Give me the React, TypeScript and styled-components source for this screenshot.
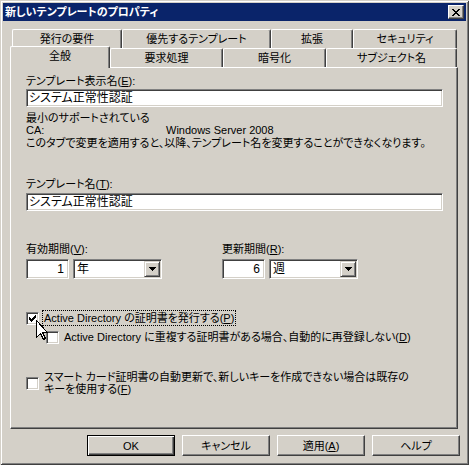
import React from 'react';
import styled, { createGlobalStyle } from 'styled-components';

const FACE = '#D4D0C8';
const SHADOW = '#808080';
const DARK = '#404040';

const GlobalStyle = createGlobalStyle`
  html, body { margin: 0; padding: 0; background: ${FACE}; }
  * { box-sizing: border-box; }
`;

const Window = styled.div`
  position: relative;
  width: 469px;
  height: 465px;
  padding: 3px;
  background: ${FACE};
  display: flex;
  flex-direction: column;
  box-shadow: inset 1px 1px 0 ${FACE}, inset -1px -1px 0 ${DARK}, inset 2px 2px 0 #fff,
    inset -2px -2px 0 ${SHADOW};
  font-family: "Liberation Sans", "Noto Sans CJK JP", sans-serif;
  font-size: 11px;
  font-feature-settings: "palt";
  color: #000;
  line-height: 12px;
`;

const TitleBar = styled.div`
  height: 18px;
  flex: none;
  background: #0a246a;
  color: #fff;
  font-weight: bold;
  font-size: 11px;
  display: flex;
  align-items: center;
  justify-content: space-between;
  padding: 0 2px 0 2px;
`;

const CloseButton = styled.div`
  width: 16px;
  height: 14px;
  background: ${FACE};
  border-top: 1px solid #fff;
  border-left: 1px solid #fff;
  border-right: 1px solid ${DARK};
  border-bottom: 1px solid ${DARK};
  box-shadow: inset -1px -1px 0 ${SHADOW};
  display: flex;
  align-items: center;
  justify-content: center;
  padding-right: 1px;
`;

const Body = styled.div`
  flex: 1;
  display: flex;
  flex-direction: column;
  padding: 8px 6px 0 7px;
`;

const TabRow = styled.div<{ $indent: number }>`
  display: flex;
  height: 19px;
  padding-left: ${(p) => p.$indent}px;
`;

const Tab = styled.div<{ $w: number; $active?: boolean }>`
  flex: none;
  width: ${(p) => p.$w}px;
  height: ${(p) => (p.$active ? 22 : 19)}px;
  margin: ${(p) => (p.$active ? '-2px 0 -1px 0' : '0')};
  position: relative;
  z-index: ${(p) => (p.$active ? 2 : 1)};
  background: ${FACE};
  border-top: 1px solid #fff;
  border-left: 1px solid #fff;
  border-right: 1px solid ${DARK};
  border-radius: 2px 2px 0 0;
  box-shadow: inset -1px 0 0 ${SHADOW};
  display: flex;
  align-items: center;
  justify-content: center;
  padding-bottom: ${(p) => (p.$active ? 4 : 0)}px;
  font-size: 11px;
`;

const Panel = styled.div`
  height: 362px;
  margin-right: 2px;
  flex: none;
  border-top: 1px solid #fff;
  border-left: 1px solid #fff;
  border-right: 1px solid ${DARK};
  border-bottom: 1px solid ${DARK};
  box-shadow: inset -1px -1px 0 ${SHADOW};
  padding: 7px 0 0 15px;
  display: flex;
  flex-direction: column;
  align-items: flex-start;
`;

const Text = styled.div<{ $mt?: number }>`
  margin-top: ${(p) => p.$mt ?? 0}px;
  line-height: 12px;
  white-space: nowrap;
`;

const InfoRow = styled.div`
  display: flex;
  line-height: 12px;
`;

const InfoKey = styled.span`
  width: 140px;
`;

const Edit = styled.div<{ $w: number; $h?: number; $mt?: number; $right?: boolean }>`
  flex: none;
  width: ${(p) => p.$w}px;
  height: ${(p) => p.$h ?? 18}px;
  margin-top: ${(p) => p.$mt ?? 0}px;
  background: #fff;
  border-top: 1px solid ${SHADOW};
  border-left: 1px solid ${SHADOW};
  border-bottom: 1px solid #fff;
  border-right: 1px solid #fff;
  box-shadow: inset 1px 1px 0 ${DARK}, inset -1px -1px 0 ${FACE};
  padding: 0 ${(p) => (p.$right ? 4 : 2)}px 0 2px;
  display: flex;
  align-items: center;
  justify-content: ${(p) => (p.$right ? 'flex-end' : 'flex-start')};
  font-size: 12px;
  white-space: nowrap;
`;

const Combo = styled.div<{ $w: number }>`
  flex: none;
  width: ${(p) => p.$w}px;
  height: 20px;
  background: #fff;
  border-top: 1px solid ${SHADOW};
  border-left: 1px solid ${SHADOW};
  border-bottom: 1px solid #fff;
  border-right: 1px solid #fff;
  box-shadow: inset 1px 1px 0 ${DARK}, inset -1px -1px 0 ${FACE};
  padding: 1px 1px 1px 3px;
  display: flex;
  align-items: center;
  justify-content: space-between;
  font-size: 12px;
`;

const DropButton = styled.div`
  width: 16px;
  height: 16px;
  background: ${FACE};
  border-top: 1px solid ${FACE};
  border-left: 1px solid ${FACE};
  border-right: 1px solid ${DARK};
  border-bottom: 1px solid ${DARK};
  box-shadow: inset 1px 1px 0 #fff, inset -1px -1px 0 ${SHADOW};
  display: flex;
  align-items: center;
  justify-content: center;
`;

const PeriodRow = styled.div`
  display: flex;
  margin-top: 32px;
`;

const PeriodGroup = styled.div<{ $w: number }>`
  width: ${(p) => p.$w}px;
  display: flex;
  flex-direction: column;
`;

const FieldPair = styled.div`
  display: flex;
  gap: 4px;
  margin-top: 4px;
`;

const CheckRow = styled.div<{ $mt: number; $indent?: number }>`
  display: flex;
  align-items: center;
  gap: 4px;
  margin-top: ${(p) => p.$mt}px;
  margin-left: ${(p) => p.$indent ?? 0}px;
`;

const CheckBox = styled.span`
  flex: none;
  width: 13px;
  height: 13px;
  background: #fff;
  border-top: 1px solid ${SHADOW};
  border-left: 1px solid ${SHADOW};
  border-bottom: 1px solid #fff;
  border-right: 1px solid #fff;
  box-shadow: inset 1px 1px 0 ${DARK}, inset -1px -1px 0 ${FACE};
  display: flex;
  align-items: center;
  justify-content: center;
`;

const CheckLabel = styled.span<{ $focus?: boolean }>`
  padding: 1px 1px;
  line-height: 12px;
  white-space: nowrap;
  outline: ${(p) => (p.$focus ? '1px dotted #000' : 'none')};
  outline-offset: 0;
`;

const ButtonRow = styled.div`
  display: flex;
  justify-content: flex-end;
  gap: 7px;
  margin-top: 6px;
`;

const Button = styled.div<{ $default?: boolean }>`
  width: 88px;
  height: 21px;
  background: ${FACE};
  display: flex;
  align-items: center;
  justify-content: center;
  font-size: 11px;
  border: 1px solid #000;
  box-shadow: inset 1px 1px 0 #fff, inset -1px -1px 0 ${DARK}, inset -2px -2px 0 ${SHADOW};
  ${(p) =>
    !p.$default &&
    `border-top-color: #fff; border-left-color: #fff; border-right-color: ${DARK}; border-bottom-color: ${DARK};
     box-shadow: inset -1px -1px 0 ${SHADOW};`}
`;

const Cursor = styled.svg`
  position: absolute;
  left: 36px;
  top: 320px;
  z-index: 5;
`;

const Pixels = ({ rows, w, h }: { rows: string[]; w: number; h: number }) => (
  <svg width={w} height={h} viewBox={`0 0 ${w} ${h}`} shapeRendering="crispEdges">
    {rows.map((r, y) =>
      r.split('').map((c, x) => (c === '#' ? <rect key={`${x}-${y}`} x={x} y={y} width={1} height={1} fill="#000" /> : null))
    )}
  </svg>
);

const CLOSE = ['##....##', '.##..##.', '..####..', '...##...', '..####..', '.##..##.', '##....##'];
const CHECK = ['......#', '.....##', '#...###', '##.###.', '#####..', '.###...', '..#....'];
const ARROW = ['#######', '.#####.', '..###..', '...#...'];

const backTabs = [
  { label: '発行の要件', w: 110 },
  { label: '優先するテンプレート', w: 149 },
  { label: '拡張', w: 82 },
  { label: 'セキュリティ', w: 104 },
];
const frontTabs = [
  { label: '全般', w: 100, active: true },
  { label: '要求処理', w: 113 },
  { label: '暗号化', w: 103 },
  { label: 'サブジェクト名', w: 131 },
];

export default function App() {
  return (
    <>
      <GlobalStyle />
      <Window>
        <TitleBar>
          <span>新しいテンプレートのプロパティ</span>
          <CloseButton>
            <Pixels rows={CLOSE} w={8} h={7} />
          </CloseButton>
        </TitleBar>
        <Body>
          <TabRow $indent={2}>
            {backTabs.map((t) => (
              <Tab key={t.label} $w={t.w}>
                {t.label}
              </Tab>
            ))}
          </TabRow>
          <TabRow $indent={0}>
            {frontTabs.map((t) => (
              <Tab key={t.label} $w={t.w} $active={t.active}>
                {t.label}
              </Tab>
            ))}
          </TabRow>
          <Panel>
            <Text>
              テンプレート表示名(<u>E</u>):
            </Text>
            <Edit $w={417} $mt={2}>
              システム正常性認証
            </Edit>
            <Text $mt={5}>最小のサポートされている</Text>
            <InfoRow>
              <InfoKey>CA:</InfoKey>
              <span>Windows Server 2008</span>
            </InfoRow>
            <Text $mt={1}>このタブで変更を適用すると、以降、テンプレート名を変更することができなくなります。</Text>
            <Text $mt={29}>
              テンプレート名(<u>T</u>):
            </Text>
            <Edit $w={417} $mt={3}>
              システム正常性認証
            </Edit>
            <PeriodRow>
              <PeriodGroup $w={196}>
                <Text>
                  有効期間(<u>V</u>):
                </Text>
                <FieldPair>
                  <Edit $w={43} $h={20} $right>
                    1
                  </Edit>
                  <Combo $w={89}>
                    <span>年</span>
                    <DropButton>
                      <Pixels rows={ARROW} w={7} h={4} />
                    </DropButton>
                  </Combo>
                </FieldPair>
              </PeriodGroup>
              <PeriodGroup $w={140}>
                <Text>
                  更新期間(<u>R</u>):
                </Text>
                <FieldPair>
                  <Edit $w={43} $h={20} $right>
                    6
                  </Edit>
                  <Combo $w={89}>
                    <span>週</span>
                    <DropButton>
                      <Pixels rows={ARROW} w={7} h={4} />
                    </DropButton>
                  </Combo>
                </FieldPair>
              </PeriodGroup>
            </PeriodRow>
            <CheckRow $mt={32}>
              <CheckBox>
                <Pixels rows={CHECK} w={7} h={7} />
              </CheckBox>
              <CheckLabel $focus>
                Active Directory の証明書を発行する(<u>P</u>)
              </CheckLabel>
            </CheckRow>
            <CheckRow $mt={5} $indent={20}>
              <CheckBox />
              <CheckLabel>
                Active Directory に重複する証明書がある場合、自動的に再登録しない(<u>D</u>)
              </CheckLabel>
            </CheckRow>
            <CheckRow $mt={26}>
              <CheckBox />
              <CheckLabel>
                スマート カード証明書の自動更新で、新しいキーを作成できない場合は既存の
                <br />
                キーを使用する(<u>F</u>)
              </CheckLabel>
            </CheckRow>
          </Panel>
          <ButtonRow>
            <Button $default>OK</Button>
            <Button>キャンセル</Button>
            <Button>
              適用(<u>A</u>)
            </Button>
            <Button>ヘルプ</Button>
          </ButtonRow>
        </Body>
        <Cursor width={13} height={21} viewBox="0 0 13 21" shapeRendering="crispEdges">
          <path d="M0.5 0.5 L0.5 17.5 L4.5 13.5 L7.5 19.5 L9.5 18.5 L6.5 12.5 L11.5 12.5 Z" fill="#fff" stroke="#000" strokeWidth={1} />
        </Cursor>
      </Window>
    </>
  );
}
